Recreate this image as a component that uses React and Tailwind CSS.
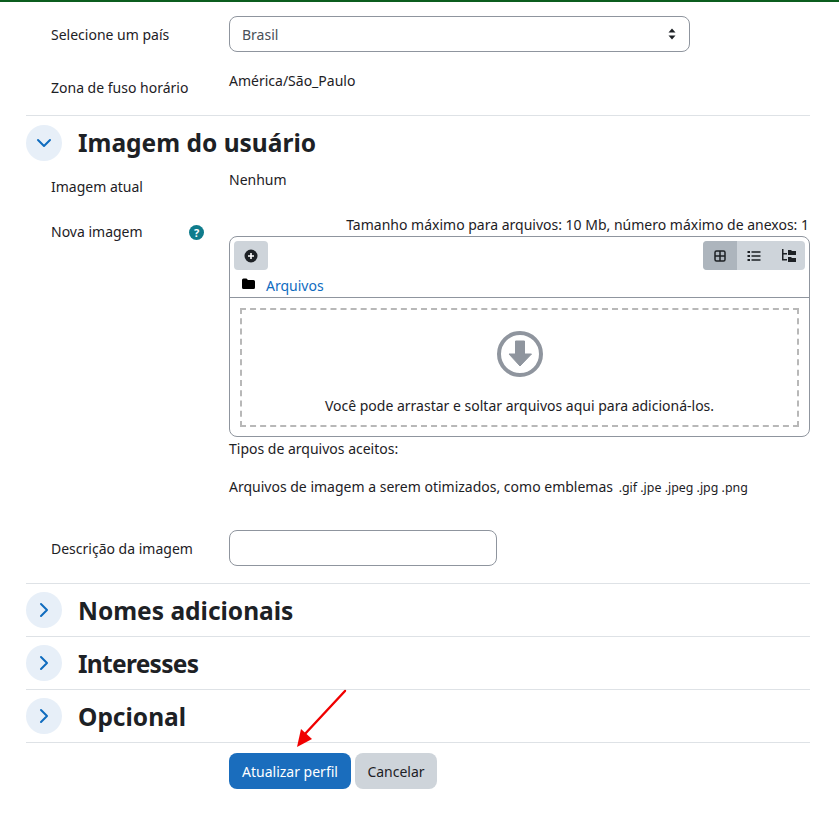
import { ChevronDown, ChevronRight } from "lucide-react";

const font = { fontFamily: '"Noto Sans", sans-serif' };

function Section({ open, title, className = "", titleClass = "" }) {
  return (
    <div className={`flex items-center h-[52px] border-t border-[#dee2e6] ${className}`}>
      <div className="w-9 h-9 rounded-full bg-[#e7eff8] flex items-center justify-center shrink-0">
        {open ? (
          <ChevronDown className="w-6 h-6 text-[#0f6cbf]" strokeWidth={2} />
        ) : (
          <ChevronRight className="w-6 h-6 text-[#0f6cbf]" strokeWidth={2} />
        )}
      </div>
      <h3 className={`ml-4 pt-0.5 text-[24.5px] leading-none font-bold text-[#1d2125] ${titleClass}`}>{title}</h3>
    </div>
  );
}

function Row({ label, children, className = "", labelClass = "" }) {
  return (
    <div className={`flex ${className}`}>
      <div className={`w-[203px] pl-[25px] shrink-0 relative ${labelClass}`}>{label}</div>
      <div className="flex-1 min-w-0">{children}</div>
    </div>
  );
}

export default function App() {
  return (
    <div className="relative w-[839px] h-[821px] bg-white text-[14px] leading-[22px] text-[#1d2125] overflow-hidden" style={font}>
      <div className="h-0.5 bg-[#0b5d1e]" />

      <div className="ml-[26px] w-[784px]">
        <Row label="Selecione um país" className="mt-[14px] items-center h-9" labelClass="pt-0.5">
          <div className="w-[461px] h-9 border border-[#8f959e] rounded-lg pl-3 pr-3 pt-0.5 flex items-center justify-between text-[#495057]">
            <span>Brasil</span>
            <svg width="8" height="12" viewBox="0 0 8 12" className="mr-[1px] -mt-0.5">
              <path d="M4 0.5 7.5 4.5H0.5Z M4 11.5 0.5 7.5H7.5Z" fill="#1d2125" />
            </svg>
          </div>
        </Row>

        <Row label="Zona de fuso horário" className="mt-[17px] h-[46px]" labelClass="pt-2">
          <div className="pt-px">América/São_Paulo</div>
        </Row>

        <Section open title="Imagem do usuário" className="h-[54px]" />

        <Row label="Imagem atual" className="h-[42px]" labelClass="pt-[7px]">
          <div>Nenhum</div>
        </Row>

        <Row
          label={
            <>
              Nova imagem
              <span className="absolute left-[163px] top-[14px] w-[15px] h-[15px] rounded-full bg-[#0f7c8c] text-white text-[11px] leading-[15px] font-bold text-center">?</span>
            </>
          }
          labelClass="pt-[10px]"
        >
          <div className="text-right pr-px pt-[3px]">Tamanho máximo para arquivos: 10 Mb, número máximo de anexos: 1</div>
          <div className="w-[581px] h-[201px] border border-[#8f959e] rounded-lg">
            <div className="flex justify-between pt-1 pl-1 pr-1">
              <button className="w-[34px] h-[29px] rounded bg-[#ced4da] flex items-center justify-center">
                <svg width="14" height="14" viewBox="0 0 14 14">
                  <circle cx="7" cy="7" r="6.5" fill="#1d2125" />
                  <path d="M7 4v6M4 7h6" stroke="#fff" strokeWidth="1.6" />
                </svg>
              </button>
              <div className="flex h-[29px] rounded overflow-hidden bg-[#ced4da]">
                <div className="w-[34px] bg-[#adb5bd] flex items-center justify-center">
                  <svg width="12" height="12" viewBox="0 0 12 12" fill="none" stroke="#1d2125" strokeWidth="1.5">
                    <rect x="1" y="1" width="10" height="10" rx="1.5" />
                    <path d="M1 6h10M6 1v10" />
                  </svg>
                </div>
                <div className="w-[34px] flex items-center justify-center">
                  <svg width="14" height="12" viewBox="0 0 14 12" fill="#1d2125">
                    <rect x="0.5" y="1" width="2.5" height="2" />
                    <rect x="0.5" y="5" width="2.5" height="2" />
                    <rect x="0.5" y="9" width="2.5" height="2" />
                    <rect x="4.5" y="1.25" width="9" height="1.5" />
                    <rect x="4.5" y="5.25" width="9" height="1.5" />
                    <rect x="4.5" y="9.25" width="9" height="1.5" />
                  </svg>
                </div>
                <div className="w-[34px] flex items-center justify-center">
                  <svg width="15" height="14" viewBox="0 0 15 14" fill="#1d2125">
                    <path d="M1 0h1.5v4H6v1.5H2.5V10H6v1.5H1Z" />
                    <path d="M7 1h3l1 1h4v4H7Z" />
                    <path d="M7 8h3l1 1h4v4H7Z" />
                  </svg>
                </div>
              </div>
            </div>

            <div className="flex items-center h-[28px] pl-[12px] border-b border-[#8f959e]">
              <svg width="13" height="11" viewBox="0 0 13 11" fill="#000">
                <path d="M0 2a1.5 1.5 0 0 1 1.5-1.5h3l1.5 1.5h5.5A1.5 1.5 0 0 1 13 3.5v6a1.5 1.5 0 0 1-1.5 1.5h-10A1.5 1.5 0 0 1 0 9.5Z" />
              </svg>
              <a className="ml-[11px] pt-1 text-[#0f6cbf]">Arquivos</a>
            </div>

            <div className="mx-[10px] mt-[10px] h-[119px] border-2 border-dashed border-[#b8b8b8] flex flex-col items-center">
              <svg width="48" height="48" viewBox="0 0 48 48" className="mt-5">
                <circle cx="24" cy="24" r="21" fill="none" stroke="#8f959e" strokeWidth="4" />
                <path d="M19.5 11h9v13h7L24 36 13 24h6.5Z" fill="#8f959e" stroke="#8f959e" strokeWidth="1" strokeLinejoin="round" />
              </svg>
              <div className="mt-[17px]">Você pode arrastar e soltar arquivos aqui para adicioná-los.</div>
            </div>
          </div>

          <div className="mt-px">Tipos de arquivos aceitos:</div>
          <div className="mt-4">
            Arquivos de imagem a serem otimizados, como emblemas{" "}
            <span className="ml-0.5 text-[12.4px]">.gif .jpe .jpeg .jpg .png</span>
          </div>
        </Row>

        <Row label="Descrição da imagem" className="mt-[31px] h-[53px]" labelClass="pt-2">
          <div className="w-[268px] h-9 border border-[#8f959e] rounded-lg" />
        </Row>

        <Section title="Nomes adicionais" className="h-[53px]" />
        <Section title="Interesses" className="h-[53px]" titleClass="tracking-[-0.7px]" />
        <Section title="Opcional" className="h-[53px]" />

        <div className="border-t border-[#dee2e6] pt-[10px] pl-[203px] flex gap-1">
          <button className="h-9 w-[122px] pt-px rounded-lg bg-[#1a6dbd] text-white">Atualizar perfil</button>
          <button className="h-9 w-[82px] pt-px rounded-lg bg-[#ced4da] text-[#1d2125]">Cancelar</button>
        </div>
      </div>

      <svg className="absolute left-[290px] top-[685px]" width="62" height="68" viewBox="0 0 62 68" fill="none">
        <path d="M55 6 14 50" stroke="#f00000" strokeWidth="2.4" strokeLinecap="round" />
        <path d="M7 62 11 44 22 54Z" fill="#f00000" />
      </svg>
    </div>
  );
}
